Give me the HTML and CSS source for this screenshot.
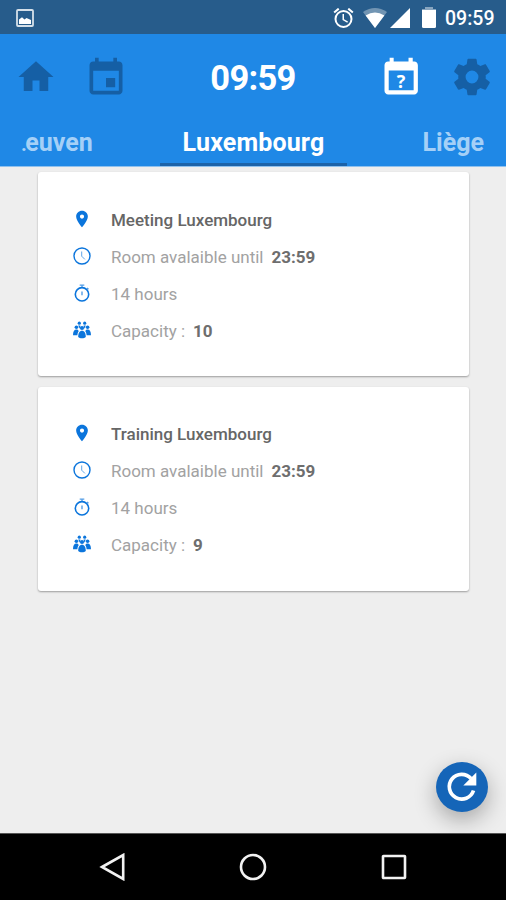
FILE: index.html
```html
<!DOCTYPE html>
<html lang="en">
<head>
<meta charset="utf-8">
<title>Rooms</title>
<link rel="stylesheet" href="styles.css">
</head>
<body>
<svg width="0" height="0" class="sprite">
  <symbol id="pin" viewBox="0 0 24 24"><path d="M12 1C7.600 1 4.200 4.400 4.200 8.600 4.200 14.500 12 23 12 23s7.800-8.500 7.800-14.400C19.800 4.400 16.400 1 12 1zm0 10.500a2.800 2.800 0 1 1 0-5.600 2.800 2.800 0 0 1 0 5.600z"/></symbol>
  <symbol id="clock" viewBox="0 0 18 18"><circle cx="9" cy="9" r="8" fill="none" stroke="currentColor" stroke-width="1.400"/><path d="M8.700 4.500v4.700l3.200 3.200" fill="none" stroke="currentColor" stroke-width="1" opacity=".65"/></symbol>
  <symbol id="timer" viewBox="0 0 18 18"><circle cx="9" cy="10.300" r="6.700" fill="none" stroke="currentColor" stroke-width="1.600"/><path d="M6.700 1.200h4.600M9 1.200v2.500M14 4l1.500 1.300" fill="none" stroke="currentColor" stroke-width="1.300" opacity=".7"/><path d="M9 7.500v3.800" stroke="currentColor" stroke-width="1.400" opacity=".7"/></symbol>
  <symbol id="people" viewBox="0 0 18 18"><circle cx="6.300" cy="2.200" r="1.600"/><circle cx="11.700" cy="2.200" r="1.600"/><circle cx="3.400" cy="6.200" r="1.800"/><circle cx="14.600" cy="6.200" r="1.800"/><circle cx="9" cy="7" r="2.100"/><path d="M0 14.300c0-3.800 1.200-5.700 3.400-5.700 1.300 0 2 .7 2.300 1.700-.8.900-1.200 2.200-1.300 4zM18 14.300c0-3.800-1.200-5.700-3.400-5.700-1.300 0-2 .7-2.300 1.700.8.900 1.200 2.200 1.300 4zM5.200 16c0-3.800 1.300-6.200 3.800-6.200s3.800 2.400 3.800 6.200c-1.500 1.700-6.100 1.700-7.600 0zM5.200 4.500h2.200l-.7 3.300zM12.800 4.500h-2.200l.7 3.300z"/></symbol>
</svg>
<div class="screen">
  <div class="status">
    <svg class="s-img" viewBox="0 0 18 18"><rect x="1" y="1" width="16" height="16" rx="1" fill="none" stroke="#d5e0e9" stroke-width="1.800"/><path d="M3 15v-4.500l3-2.300 2.500 2.200 2-1.300L15 11v4z" fill="#fff"/></svg>
    <svg class="s-alarm" viewBox="1.500 2 21 20"><path d="M22 5.720l-4.600-3.860-1.290 1.530 4.600 3.860L22 5.720zM7.880 3.390L6.600 1.860 2 5.710l1.290 1.530 4.590-3.850zM12.500 8H11v6l4.750 2.850.75-1.230-4-2.370V8zM12 4a9 9 0 1 0 0 18 9 9 0 0 0 0-18zm0 16a7 7 0 1 1 0-14 7 7 0 0 1 0 14z"/></svg>
    <svg class="s-wifi" viewBox="0 0 24 20"><path opacity=".35" d="M12 20L0 4Q12-4 24 4z"/><path d="M12 20L2.600 7.400Q12 1.500 21.400 7.400z"/></svg>
    <svg class="s-signal" viewBox="0 0 20 20"><path d="M20 0v20H0z"/></svg>
    <svg class="s-battery" viewBox="0 0 14 21"><path opacity=".45" d="M3 0h8v2h3v3H0V2h3z"/><path d="M0 3h14v16.500q0 1.500-1.500 1.500h-11Q0 21 0 19.500z"/></svg>
    <span class="s-time">09:59</span>
  </div>
  <header>
    <div class="toolbar">
      <svg class="home" viewBox="0 0 24 24"><path d="M10 20v-6h4v6h5v-8h3L12 3 2 12h3v8z"/></svg>
      <svg class="event" viewBox="0 0 24 24"><path d="M17 12h-5v5h5v-5zM16 1v2H8V1H6v2H5c-1.110 0-1.990.9-1.990 2L3 19c0 1.100.89 2 2 2h14c1.100 0 2-.9 2-2V5c0-1.100-.9-2-2-2h-1V1h-2zm3 18H5V8h14v11z"/></svg>
      <h1>09:59</h1>
      <div class="ask"><svg viewBox="0 0 24 24"><path d="M16.100 1v2H8V1H5.800v2H5c-1.100 0-2 .9-2 2v14c0 1.100.9 2 2 2h14.200c1.100 0 2-.9 2-2V5c0-1.100-.9-2-2-2h-.8V1h-2.300zm2.800 17.700H5.300V7.900h13.600v10.800z"/></svg><span>?</span></div>
      <svg class="gear" viewBox="0 0 24 24"><path d="M19.430 12.980c.04-.32.07-.64.07-.98s-.03-.66-.07-.98l2.110-1.650c.19-.15.24-.42.12-.64l-2-3.460c-.12-.22-.39-.3-.61-.22l-2.490 1c-.52-.4-1.080-.73-1.690-.98l-.38-2.650C14.460 2.180 14.250 2 14 2h-4c-.25 0-.46.18-.49.42l-.38 2.650c-.61.25-1.170.59-1.690.98l-2.490-1c-.23-.09-.49 0-.61.22l-2 3.460c-.13.22-.07.49.12.64l2.110 1.650c-.04.32-.07.65-.07.98s.03.66.07.98l-2.110 1.650c-.19.15-.24.42-.12.64l2 3.460c.12.22.39.3.61.22l2.490-1c.52.4 1.080.73 1.690.98l.38 2.650c.03.24.24.42.49.42h4c.25 0 .46-.18.49-.42l.38-2.650c.61-.25 1.170-.59 1.690-.98l2.490 1c.23.09.49 0 .61-.22l2-3.460c.12-.22.07-.49-.12-.64l-2.110-1.650zM12 15.500a3.500 3.500 0 1 1 0-7 3.500 3.500 0 0 1 0 7z"/></svg>
    </div>
    <nav>
      <span class="tab left"><i>.</i>euven</span>
      <span class="tab active">Luxembourg</span>
      <span class="tab right">Liège</span>
    </nav>
  </header>
  <main>
    <section class="card">
      <div class="row"><svg><use href="#pin"/></svg><b class="name">Meeting Luxembourg</b></div>
      <div class="row"><svg><use href="#clock"/></svg><span>Room avalaible until</span><b>23:59</b></div>
      <div class="row"><svg><use href="#timer"/></svg><span>14 hours</span></div>
      <div class="row"><svg><use href="#people"/></svg><span>Capacity :</span><b>10</b></div>
    </section>
    <section class="card">
      <div class="row"><svg><use href="#pin"/></svg><b class="name">Training Luxembourg</b></div>
      <div class="row"><svg><use href="#clock"/></svg><span>Room avalaible until</span><b>23:59</b></div>
      <div class="row"><svg><use href="#timer"/></svg><span>14 hours</span></div>
      <div class="row"><svg><use href="#people"/></svg><span>Capacity :</span><b>9</b></div>
    </section>
    <button class="fab" aria-label="Refresh"><svg viewBox="0 0 32 32"><path d="M25 7.500A12.400 12.400 0 1 0 27.500 19.500" fill="none" stroke="#fff" stroke-width="3.700"/><path d="M30.300 1.500v13H17.300z" fill="#fff"/></svg></button>
  </main>
  <footer>
    <svg viewBox="0 0 28 28"><path d="M3 14L24.200 2v24z"/></svg>
    <svg viewBox="0 0 28 28"><circle cx="14" cy="14" r="12"/></svg>
    <svg viewBox="0 0 28 28"><rect x="3" y="3" width="22" height="22" rx=".5"/></svg>
  </footer>
</div>
</body>
</html>
```
FILE: styles.css
```css
* { box-sizing: border-box; }
body { margin: 0; font-family: Roboto, sans-serif; }
svg { display: block; flex: none; fill: currentColor; }
.sprite { position: absolute; }
.screen { width: 506px; height: 900px; display: flex; flex-direction: column; overflow: hidden; background: #eee; }

.status { height: 34px; background: #275c8b; color: #fff; display: flex; align-items: center; padding: 2px 10px 0 16px; }
.s-img { width: 18px; height: 18px; }
.s-alarm { width: 21px; height: 20px; margin-left: auto; }
.s-wifi { width: 24px; height: 20px; margin-left: 9px; }
.s-signal { width: 20px; height: 20px; margin-left: 3px; }
.s-battery { width: 14px; height: 21px; margin: -2px 0 0 12px; }
.s-time { width: 51px; margin-left: 9px; padding-top: 1px; font-size: 19.500px; line-height: 24px; font-weight: 500; white-space: nowrap; }

header { height: 133px; background: #1f88e6; border-bottom: 1px solid #8fc1ee; display: flex; flex-direction: column; }
.toolbar { height: 86px; display: flex; align-items: center; padding: 0 12px 0 15px; color: #155fa5; }
.home { width: 42px; height: 42px; }
.event { width: 44px; height: 44px; margin: 2px 0 0 27px; }
h1 { width: 124px; margin: 1px 64px 0 63px; font-size: 34.500px; letter-spacing: -.7px; line-height: 40px; font-weight: 700; color: #fff; text-align: center; }
.ask { color: #fff; width: 44px; height: 44px; margin-top: 2px; display: grid; }
.ask svg, .ask span { grid-area: 1 / 1; }
.ask svg { width: 44px; height: 44px; }
.ask span { font-family: "Open Sans", sans-serif; font-size: 18px; line-height: 22px; font-weight: 700; text-align: center; padding-top: 14px; }
.gear { width: 44px; height: 44px; margin-left: auto; }
nav { height: 46px; display: grid; grid-template-columns: 160px 187px 159px; font-size: 25px; line-height: 46px; font-weight: 700; color: #a5d0f7; }
.tab { white-space: nowrap; height: 46px; }
.left { padding-left: 21px; }
.left i { font-style: normal; font-size: 20px; margin-right: -1.500px; }
.active { color: #fff; text-align: center; letter-spacing: .15px; border-bottom: 3px solid #1b62a8; }
.right { text-align: right; padding-right: 22px; }

main { flex: 1; position: relative; padding: 5px 37px 0 38px; display: flex; flex-direction: column; gap: 10.500px; }
.card { height: 204px; background: #fff; border-radius: 3px; box-shadow: 0 1px 2px rgba(0,0,0,.35); padding: 29px 35px 0; }
.row { height: 37px; display: flex; align-items: center; font-size: 17px; line-height: 22px; color: #a2a2a2; white-space: nowrap; }
.row svg { width: 18px; height: 18px; margin: -2px 20px 0 0; color: #0b75dc; }
.row b { font-weight: 700; color: #6e6e6e; margin-left: 8px; }
.row b.name { margin-left: 0; font-weight: 500; color: #666; }

.fab { position: absolute; right: 18px; bottom: 21px; width: 52px; height: 50px; padding: 0; border: 0; border-radius: 50%; background: #1565b8; display: grid; place-items: center; box-shadow: 0 8px 22px rgba(0,0,0,.3); }
.fab svg { width: 32px; height: 32px; }

footer { height: 67px; background: #000; border-top: 1px solid #555; display: flex; justify-content: center; align-items: center; gap: 112.500px; }
footer svg { width: 28px; height: 28px; fill: none; stroke: #f2f2f2; stroke-width: 2.600; }
```
